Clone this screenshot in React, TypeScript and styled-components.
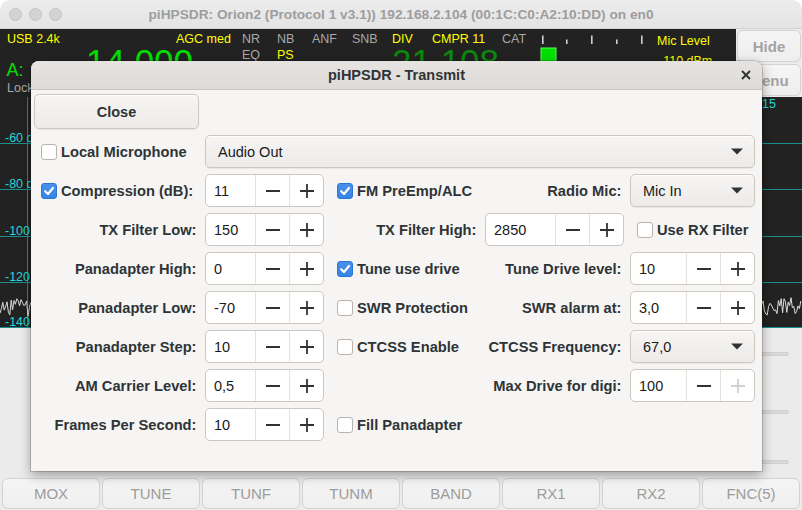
import React from 'react';
import styled, { createGlobalStyle, css } from 'styled-components';

const Global = createGlobalStyle`
  html, body { margin: 0; padding: 0; background: #ffffff; }
  body { font-family: "Liberation Sans", Arial, sans-serif; }
  * { box-sizing: border-box; }
`;

const FONT = `"Liberation Sans", Arial, sans-serif`;

/* ---------- window frame ---------- */
const Window = styled.div`
  position: relative;
  width: 802px;
  height: 510px;
  overflow: hidden;
  display: flex;
  flex-direction: column;
  background: #ebebeb;
  border-radius: 10px 10px 0 0;
  font-family: ${FONT};
`;

const TitleBar = styled.div`
  flex: none;
  height: 29px;
  display: grid;
  grid-template-columns: 62px 1fr 62px;
  align-items: center;
  background: linear-gradient(#ececec, #e4e4e4);
  border-bottom: 1px solid #d2d2d2;
  border-radius: 10px 10px 0 0;
`;

const Lights = styled.div`
  display: flex;
  gap: 7px;
  padding-left: 8.5px;
`;

const Light = styled.span`
  width: 13px;
  height: 13px;
  border-radius: 50%;
  background: #d3d3d3;
  border: 1px solid #c3c3c3;
`;

const WindowTitle = styled.div`
  text-align: center;
  font-weight: bold;
  font-size: 13.7px;
  color: #9d9d9d;
  white-space: nowrap;
`;

/* ---------- main window content ---------- */
const TopRow = styled.div`
  flex: none;
  height: 68px;
  display: flex;
`;

const Vfo = styled.div`
  position: relative;
  width: 736px;
  background: #222222;
  overflow: hidden;
`;

const VfoText = styled.span<{ $x: number; $y: number; $size?: number; $color: string }>`
  position: absolute;
  left: ${(p) => p.$x}px;
  top: ${(p) => p.$y}px;
  font-size: ${(p) => p.$size ?? 12.5}px;
  line-height: 1;
  color: ${(p) => p.$color};
  white-space: nowrap;
`;

const MeterDrawing = styled.svg`
  position: absolute;
  left: 536px;
  top: 5px;
`;

const SideButtons = styled.div`
  flex: 1;
  display: flex;
  flex-direction: column;
  gap: 2px;
  padding: 1px 1px 1px 1px;
`;

const SideButton = styled.div`
  flex: 1;
  display: flex;
  align-items: center;
  justify-content: center;
  background: linear-gradient(#f5f5f5, #eeeeee);
  border: 1px solid #d3d3d3;
  border-radius: 6px;
  font-weight: bold;
  font-size: 15px;
  color: #a3a3a3;
`;

const Panadapter = styled.div`
  flex: none;
  height: 231px;
  background: #222222;
`;

const SliderArea = styled.div`
  flex: none;
  height: 150px;
  display: flex;
  flex-direction: column;
  align-items: flex-end;
  padding: 24px 13px 0 0;
  background: #ebebeb;
`;

const SliderTrack = styled.div<{ $gap: number }>`
  margin-top: ${(p) => p.$gap}px;
  width: 260px;
  height: 4px;
  border-radius: 2px;
  background: #d9d9d9;
  border: 1px solid #cfcfcf;
`;

const BottomBar = styled.div`
  flex: 1;
  display: grid;
  grid-template-columns: repeat(8, 98px);
  column-gap: 2px;
  padding: 0 2px 1px 2px;
`;

const BottomButton = styled.div`
  display: flex;
  align-items: center;
  justify-content: center;
  background: linear-gradient(#f5f5f5, #efefef);
  border: 1px solid #d2d2d2;
  border-radius: 6px;
  font-size: 15px;
  color: #9c9c9c;
`;

/* ---------- dialog ---------- */
const Dialog = styled.div`
  position: absolute;
  left: 31px;
  top: 61px;
  width: 731px;
  height: 410px;
  background: #f6f5f4;
  border-radius: 8px 8px 0 0;
  box-shadow: 0 0 0 1px rgba(0, 0, 0, 0.16), 0 4px 12px rgba(0, 0, 0, 0.35);
  color: #2e3436;
`;

const DialogHeader = styled.div`
  height: 29px;
  display: grid;
  grid-template-columns: 32px 1fr 32px;
  align-items: center;
  background: linear-gradient(#e6e3e0, #dedad7);
  border-bottom: 1px solid #c9c4bf;
  border-radius: 8px 8px 0 0;
`;

const DialogTitle = styled.div`
  grid-column: 2;
  text-align: center;
  font-weight: bold;
  font-size: 14.5px;
  color: #2e3436;
`;

const CloseX = styled.div`
  display: flex;
  align-items: center;
  justify-content: center;
`;

const Grid = styled.div`
  display: grid;
  grid-template-columns: 165px 119px 149px 139px 125px;
  grid-template-rows: 35px repeat(8, 33px);
  column-gap: 6px;
  row-gap: 6px;
  padding: 4px 7px 0 3px;
`;

type Place = { $r: number; $c: string };
const placed = css<Place>`
  grid-row: ${(p) => p.$r};
  grid-column: ${(p) => p.$c};
`;

const buttonFace = css`
  background: linear-gradient(#f6f5f4, #edebe9);
  border: 1px solid #cdc7c2;
  border-radius: 5px;
  box-shadow: inset 0 1px #ffffff, 0 1px 1px rgba(0, 0, 0, 0.06);
`;

const CloseButton = styled.div<Place>`
  ${placed};
  ${buttonFace};
  display: flex;
  align-items: center;
  justify-content: center;
  font-weight: bold;
  font-size: 14.5px;
  color: #2e3436;
`;

const Label = styled.div<Place>`
  ${placed};
  display: flex;
  align-items: center;
  justify-content: flex-end;
  padding-right: 2.5px;
  font-weight: bold;
  font-size: 14.7px;
  white-space: nowrap;
`;

const CheckRow = styled.div<Place>`
  ${placed};
  display: flex;
  align-items: center;
  gap: 4.5px;
  padding-left: 6.5px;
  font-weight: bold;
  font-size: 14.7px;
  white-space: nowrap;
`;

const Box = styled.span<{ $on: boolean }>`
  flex: none;
  width: 16px;
  height: 16px;
  border-radius: 3px;
  display: flex;
  align-items: center;
  justify-content: center;
  ${(p) =>
    p.$on
      ? css`
          background: linear-gradient(#4a90e9, #3584e4);
          border: 1px solid #2a76d6;
        `
      : css`
          background: #ffffff;
          border: 1px solid #b9b3ad;
        `}
`;

const SpinBox = styled.div<Place>`
  ${placed};
  display: flex;
  background: #ffffff;
  border: 1px solid #cdc7c2;
  border-radius: 5px;
  overflow: hidden;
`;

const SpinEntry = styled.div`
  flex: 1;
  min-width: 0;
  display: flex;
  align-items: center;
  padding-left: 8px;
  font-size: 14.5px;
  color: #1a1a1a;
`;

const StepButton = styled.div<{ $disabled?: boolean }>`
  flex: none;
  width: 34px;
  display: flex;
  align-items: center;
  justify-content: center;
  border-left: 1px solid #e4e1de;
  color: ${(p) => (p.$disabled ? '#d2d0ce' : '#2e3436')};
`;

const Combo = styled.div<Place>`
  ${placed};
  ${buttonFace};
  display: flex;
  align-items: center;
  justify-content: space-between;
  padding: 0 11px 0 12px;
  font-size: 14.5px;
  color: #1a1a1a;
`;

/* ---------- icons ---------- */
const MinusIcon = () => (
  <svg width="16" height="16" viewBox="0 0 16 16">
    <line x1="1" y1="8" x2="15" y2="8" stroke="currentColor" strokeWidth="1.8" />
  </svg>
);

const PlusIcon = () => (
  <svg width="16" height="16" viewBox="0 0 16 16">
    <line x1="1" y1="8" x2="15" y2="8" stroke="currentColor" strokeWidth="1.8" />
    <line x1="8" y1="1" x2="8" y2="15" stroke="currentColor" strokeWidth="1.8" />
  </svg>
);

const Arrow = () => (
  <svg width="12" height="7" viewBox="0 0 12 7">
    <polygon points="0,0.5 12,0.5 6,6.5" fill="#2e3436" />
  </svg>
);

const Tick = () => (
  <svg width="12" height="12" viewBox="0 0 12 12">
    <polyline points="2.2,6.2 5,9 10,3" fill="none" stroke="#ffffff" strokeWidth="2.2" strokeLinecap="round" strokeLinejoin="round" />
  </svg>
);

/* ---------- composite widgets ---------- */
function Check({ r, c, on, children }: { r: number; c: string; on?: boolean; children: React.ReactNode }) {
  return (
    <CheckRow $r={r} $c={c}>
      <Box $on={!!on}>{on && <Tick />}</Box>
      {children}
    </CheckRow>
  );
}

function Spin({ r, c, value, plusDisabled }: { r: number; c: string; value: string; plusDisabled?: boolean }) {
  return (
    <SpinBox $r={r} $c={c}>
      <SpinEntry>{value}</SpinEntry>
      <StepButton>
        <MinusIcon />
      </StepButton>
      <StepButton $disabled={plusDisabled}>
        <PlusIcon />
      </StepButton>
    </SpinBox>
  );
}

function Select({ r, c, value }: { r: number; c: string; value: string }) {
  return (
    <Combo $r={r} $c={c}>
      <span>{value}</span>
      <Arrow />
    </Combo>
  );
}

/* ---------- panadapter drawing ---------- */
const wavePath = (() => {
  let s = 98765;
  const rnd = () => {
    s = (Math.imul(s, 1103515245) + 12345) >>> 0;
    return s / 4294967296;
  };
  const pts: string[] = [];
  for (let x = 0; x <= 802; x += 1.4) {
    let y = 209 + (rnd() - 0.5) * 18;
    if (rnd() < 0.18) y += (rnd() - 0.5) * 22;
    pts.push(`${x.toFixed(1)},${y.toFixed(1)}`);
  }
  return 'M' + pts.join(' L');
})();

const dbLines = [
  { y: 46.5, label: '-60 dBm' },
  { y: 92.5, label: '-80 dBm' },
  { y: 139.5, label: '-100 dBm' },
  { y: 185.5, label: '-120 dBm' },
  { y: 230.5, label: '-140 dBm' },
];

function SpectrumDrawing() {
  return (
    <svg width="802" height="231" viewBox="0 0 802 231" style={{ display: 'block' }}>
      <line x1="27.5" y1="0" x2="27.5" y2="231" stroke="#1c8e8e" strokeWidth="1" />
      {dbLines.map((l) => (
        <g key={l.label}>
          <line x1="0" y1={l.y} x2="802" y2={l.y} stroke="#1c8e8e" strokeWidth="1" />
          <text x="5" y={l.y - 1.5} fill="#22d8d8" fontSize="12.5" fontFamily={FONT}>
            {l.label}
          </text>
        </g>
      ))}
      <text x="776" y="10.5" fill="#22d8d8" fontSize="12.5" fontFamily={FONT} textAnchor="end">
        14.215
      </text>
      <path d={wavePath} fill="none" stroke="#dcdcdc" strokeWidth="1" />
    </svg>
  );
}

function MeterTicks() {
  return (
    <MeterDrawing width="120" height="30" viewBox="0 0 120 30">
      <rect x="6" y="1.5" width="1.6" height="8.5" fill="#cfcfcf" />
      <rect x="30" y="5.5" width="1.6" height="4.5" fill="#cfcfcf" />
      <rect x="55" y="1.5" width="1.6" height="8.5" fill="#cfcfcf" />
      <rect x="80" y="5.5" width="1.6" height="4.5" fill="#cfcfcf" />
      <rect x="105" y="1.5" width="1.6" height="8.5" fill="#cfcfcf" />
      <rect x="5" y="14" width="15" height="16" fill="#00e000" stroke="#5cff5c" strokeWidth="1" />
    </MeterDrawing>
  );
}

const Y = '#ffff00';
const G = '#a9a9a9';

export default function App() {
  return (
    <>
      <Global />
      <Window>
        <TitleBar>
          <Lights>
            <Light />
            <Light />
            <Light />
          </Lights>
          <WindowTitle>piHPSDR: Orion2 (Protocol 1 v3.1)) 192.168.2.104 (00:1C:C0:A2:10:DD) on en0</WindowTitle>
          <span />
        </TitleBar>

        <TopRow>
          <Vfo>
            <VfoText $x={7} $y={4.4} $color={Y}>USB 2.4k</VfoText>
            <VfoText $x={176} $y={4.4} $color={Y}>AGC med</VfoText>
            <VfoText $x={242} $y={4.4} $color={G}>NR</VfoText>
            <VfoText $x={277} $y={4.4} $color={G}>NB</VfoText>
            <VfoText $x={312} $y={4.4} $color={G}>ANF</VfoText>
            <VfoText $x={352} $y={4.4} $color={G}>SNB</VfoText>
            <VfoText $x={392} $y={4.4} $color={Y}>DIV</VfoText>
            <VfoText $x={432} $y={4.4} $color={Y}>CMPR 11</VfoText>
            <VfoText $x={502} $y={4.4} $color={G}>CAT</VfoText>
            <VfoText $x={242} $y={20} $color={G}>EQ</VfoText>
            <VfoText $x={277} $y={20} $color={Y}>PS</VfoText>
            <VfoText $x={6.5} $y={31.7} $size={18} $color="#00e000">A:</VfoText>
            <VfoText $x={7} $y={52.7} $color={G}>Lock</VfoText>
            <VfoText $x={86} $y={14.7} $size={35} $color="#00e000">14.000</VfoText>
            <VfoText $x={392} $y={15.4} $size={35} $color="#0b8a0b">21.108</VfoText>
            <MeterTicks />
            <VfoText $x={657} $y={6.1} $color={Y}>Mic Level</VfoText>
            <VfoText $x={659} $y={26.1} $color={Y}>-110 dBm</VfoText>
          </Vfo>
          <SideButtons>
            <SideButton>Hide</SideButton>
            <SideButton>Menu</SideButton>
          </SideButtons>
        </TopRow>

        <Panadapter>
          <SpectrumDrawing />
        </Panadapter>

        <SliderArea>
          <SliderTrack $gap={0} />
          <SliderTrack $gap={54} />
          <SliderTrack $gap={46} />
        </SliderArea>

        <BottomBar>
          {['MOX', 'TUNE', 'TUNF', 'TUNM', 'BAND', 'RX1', 'RX2', 'FNC(5)'].map((t) => (
            <BottomButton key={t}>{t}</BottomButton>
          ))}
        </BottomBar>

        <Dialog>
          <DialogHeader>
            <DialogTitle>piHPSDR - Transmit</DialogTitle>
            <CloseX>
              <svg width="10" height="10" viewBox="0 0 10 10">
                <line x1="1" y1="1" x2="9" y2="9" stroke="#2e3436" strokeWidth="2" />
                <line x1="9" y1="1" x2="1" y2="9" stroke="#2e3436" strokeWidth="2" />
              </svg>
            </CloseX>
          </DialogHeader>
          <Grid>
            <CloseButton $r={1} $c="1">Close</CloseButton>

            <Check r={2} c="1">Local Microphone</Check>
            <Select r={2} c="2 / 6" value="Audio Out" />

            <Check r={3} c="1" on>Compression (dB):</Check>
            <Spin r={3} c="2" value="11" />
            <Check r={3} c="3" on>FM PreEmp/ALC</Check>
            <Label $r={3} $c="4">Radio Mic:</Label>
            <Select r={3} c="5" value="Mic In" />

            <Label $r={4} $c="1">TX Filter Low:</Label>
            <Spin r={4} c="2" value="150" />
            <Label $r={4} $c="3">TX Filter High:</Label>
            <Spin r={4} c="4" value="2850" />
            <Check r={4} c="5">Use RX Filter</Check>

            <Label $r={5} $c="1">Panadapter High:</Label>
            <Spin r={5} c="2" value="0" />
            <Check r={5} c="3" on>Tune use drive</Check>
            <Label $r={5} $c="4">Tune Drive level:</Label>
            <Spin r={5} c="5" value="10" />

            <Label $r={6} $c="1">Panadapter Low:</Label>
            <Spin r={6} c="2" value="-70" />
            <Check r={6} c="3">SWR Protection</Check>
            <Label $r={6} $c="4">SWR alarm at:</Label>
            <Spin r={6} c="5" value="3,0" />

            <Label $r={7} $c="1">Panadapter Step:</Label>
            <Spin r={7} c="2" value="10" />
            <Check r={7} c="3">CTCSS Enable</Check>
            <Label $r={7} $c="4">CTCSS Frequency:</Label>
            <Select r={7} c="5" value="67,0" />

            <Label $r={8} $c="1">AM Carrier Level:</Label>
            <Spin r={8} c="2" value="0,5" />
            <Label $r={8} $c="4">Max Drive for digi:</Label>
            <Spin r={8} c="5" value="100" plusDisabled />

            <Label $r={9} $c="1">Frames Per Second:</Label>
            <Spin r={9} c="2" value="10" />
            <Check r={9} c="3">Fill Panadapter</Check>
          </Grid>
        </Dialog>
      </Window>
    </>
  );
}
